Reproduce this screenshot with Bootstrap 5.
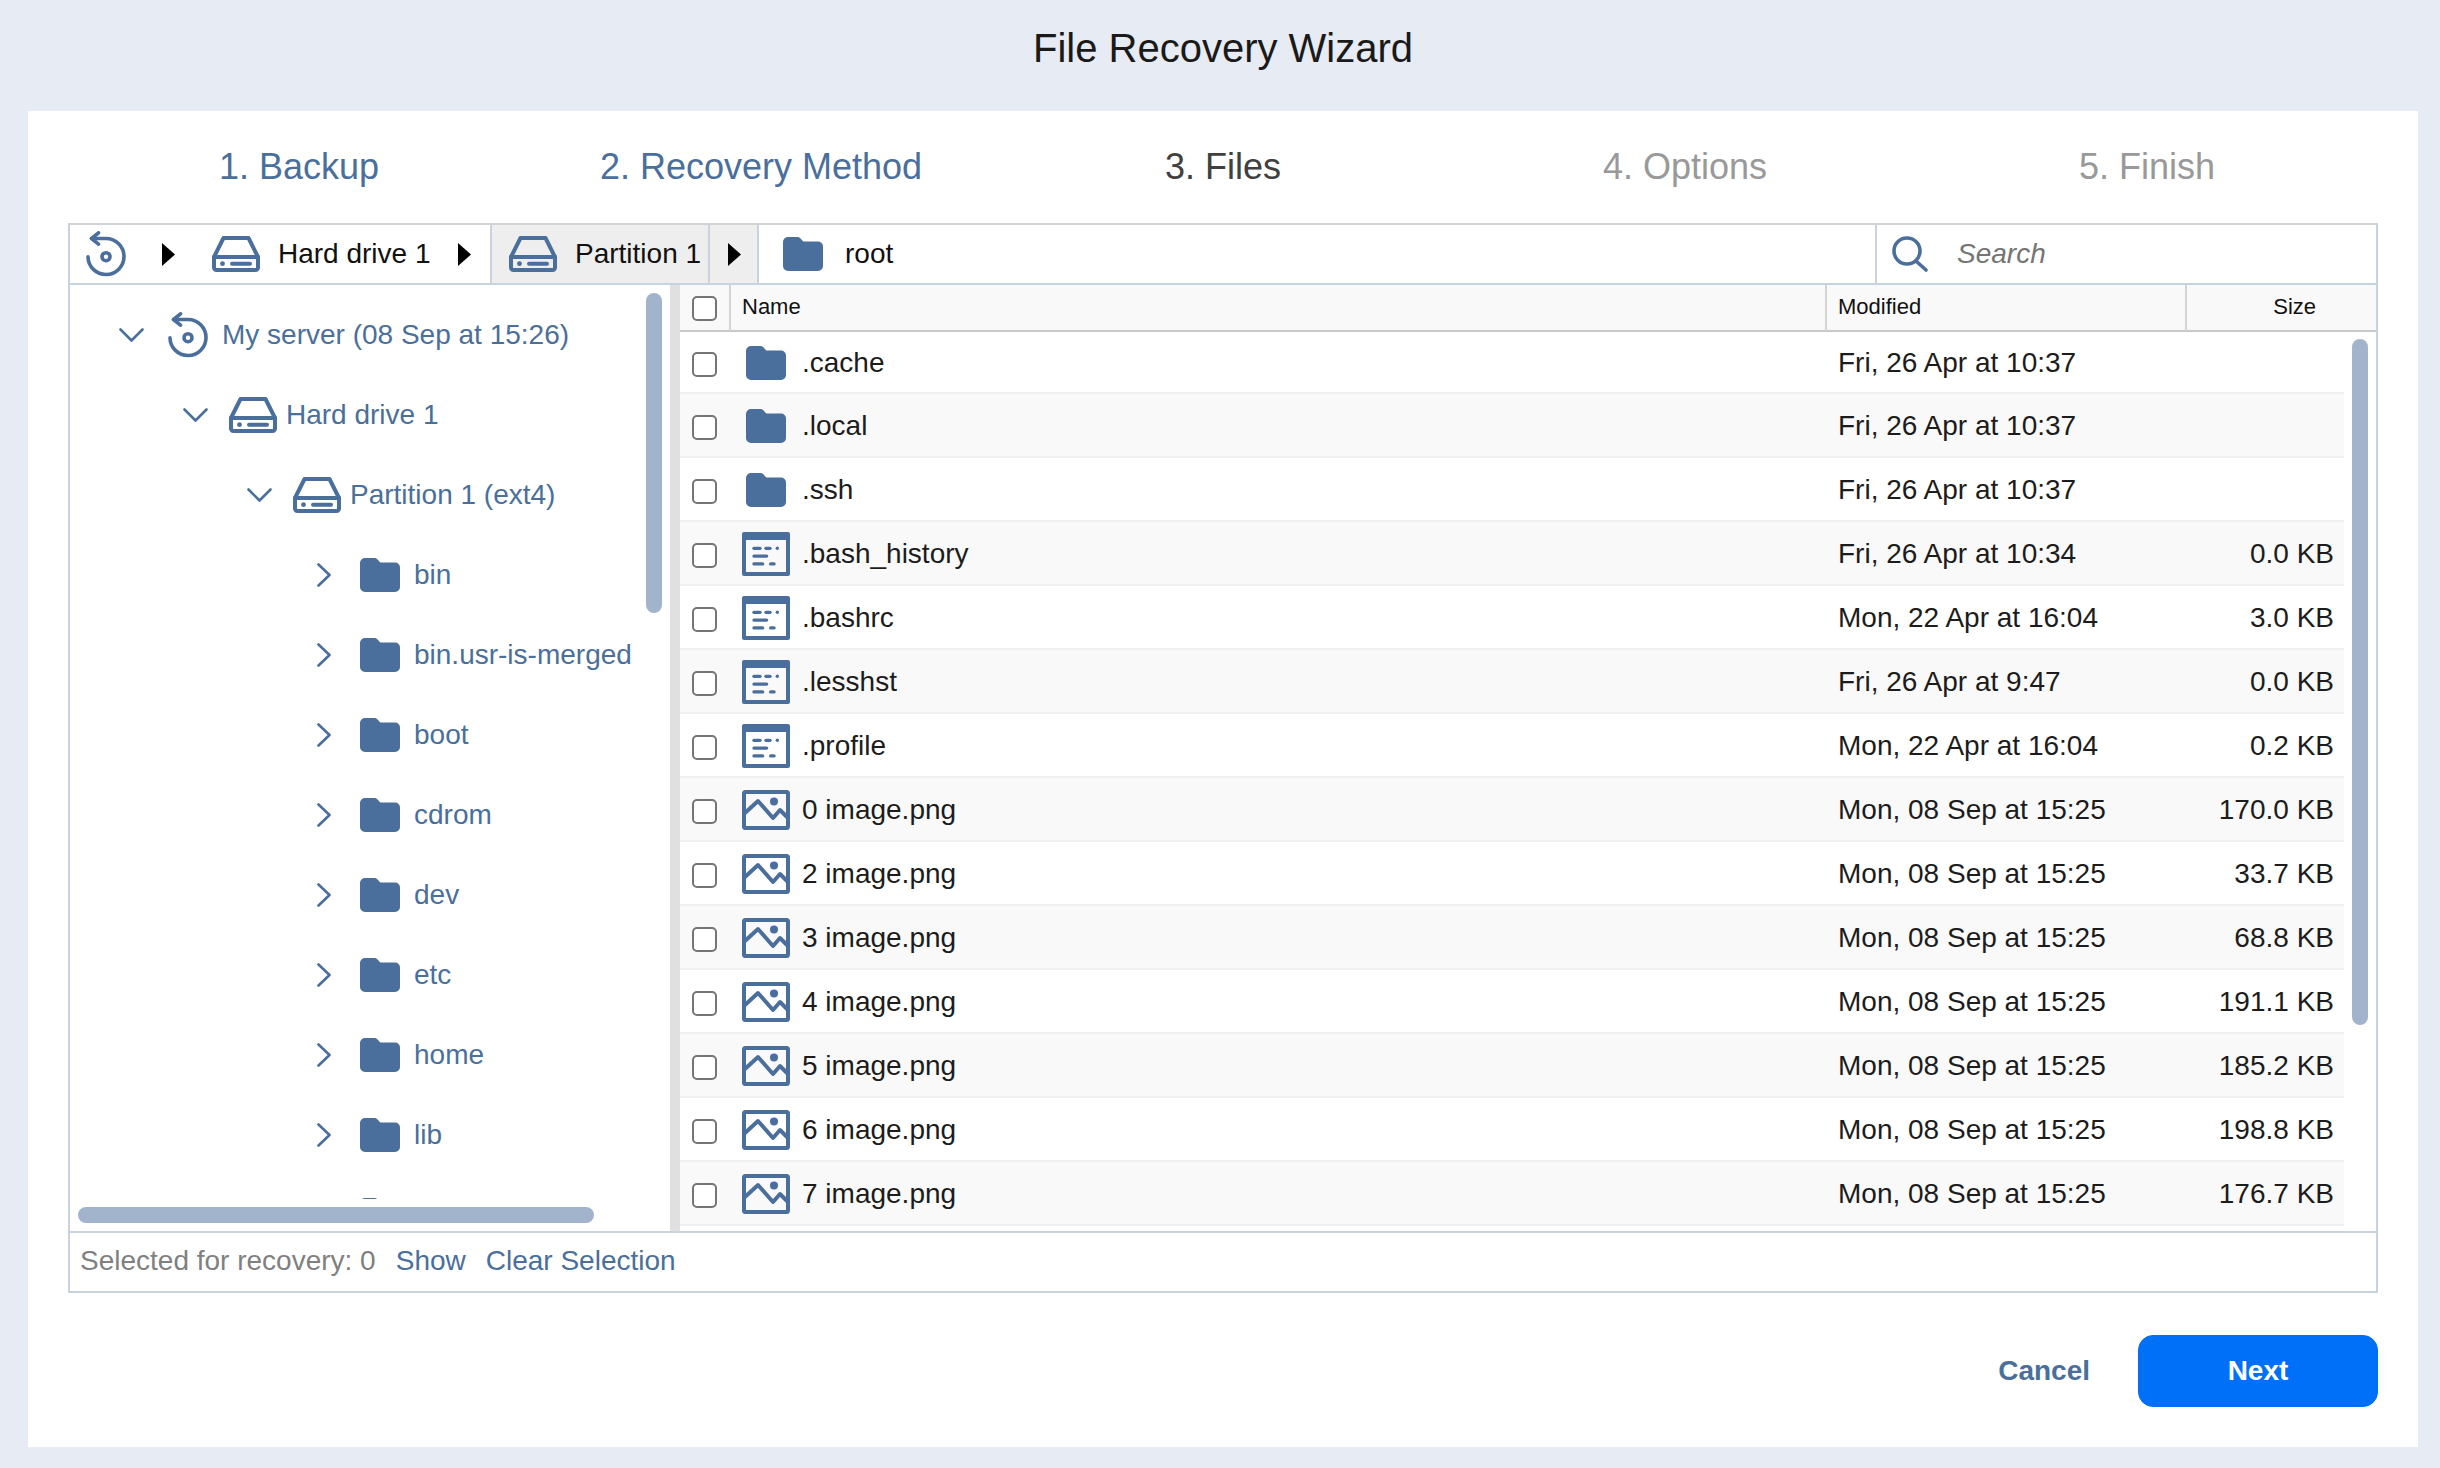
<!DOCTYPE html>
<html lang="en">
<head>
<meta charset="utf-8">
<title>File Recovery Wizard</title>
<link rel="stylesheet" href="https://cdn.jsdelivr.net/npm/bootstrap@5.3.0/dist/css/bootstrap.min.css">
<style>
html,body{margin:0;background:#e7ebf3;font-family:"Liberation Sans",Arial,sans-serif;font-size:28px;color:#1c1c1c;}
.app-shell{width:2440px;height:1468px;overflow:hidden;}
.wiz-title{height:111px;margin:0 0 0 28px;width:2390px;font-size:40px;font-weight:400;color:#1a1a1a;padding-bottom:16px;}
.wiz-card{margin-left:28px;width:2390px;height:1336px;background:#fff;padding:0 40px;}
.wiz-steps{height:112px;padding-bottom:0;}
.wiz-step{width:462px;font-size:36px;text-align:center;padding-top:0;line-height:1;}
.step-done{color:#4a6f9c;}
.step-now{color:#404040;}
.step-next{color:#999;}
.browser{height:1070px;border:2px solid #c8d3e0;border-top-color:#d0d3d6;}
svg{display:block;flex:none;}
.ico-fill{fill:#4a6f9c;}
.ico-line{fill:none;stroke:#4a6f9c;stroke-width:3.6;stroke-linecap:round;stroke-linejoin:round;}
.crumbs{height:60px;border-bottom:2px solid #c8d3e0;color:#111;}
.crumb-first{width:420px;padding-left:16px;}
.tri{width:13px;height:23px;fill:#000;}
.crumb-sel{background:#eee;border-right:2px solid #c8d3e0;}
.crumb-part{width:220px;padding-left:17px;white-space:nowrap;overflow:hidden;border-left:2px solid #c8d3e0;}
.crumb-arrow{width:49px;padding-left:18px;}
.crumb-root{padding-left:24px;}
.crumb-search{width:501px;padding-left:15px;border-left:2px solid #c8d3e0;color:#757575;font-style:italic;}
.ml-36{margin-left:36px;}.ml-37{margin-left:37px;}.ml-18{margin-left:18px;}.ml-22{margin-left:22px;}.ml-27{margin-left:27px;}.ml-29{margin-left:29px;}
.pane-row{height:946px;}
.tree-pane{width:600px;position:relative;}
.tree-clip{height:914px;overflow:hidden;padding-top:10px;}
.tree-row{height:80px;color:#4a6f9c;white-space:nowrap;}
.l1{padding-left:49px;}.l2{padding-left:113px;}.l3{padding-left:177px;}.l4{padding-left:247px;}
.tw{flex:none;}
.l1 .tw{width:49px;}.l2 .tw,.l3 .tw{width:46px;}.l4 .tw{width:43px;}
.gap-disk{margin-left:14px;}.gap-drive{margin-left:9px;}
.chev{fill:none;stroke:#4a6f9c;stroke-width:2.6;stroke-linecap:round;stroke-linejoin:round;}
.vbar,.hbar{position:absolute;background:#a2b4cc;border-radius:8px;}
.tree-vbar{left:576px;top:8px;width:16px;height:320px;}
.tree-hbar{left:8px;top:922px;width:516px;height:16px;}
.splitter{width:10px;background:#e0e0e0;}
.list-pane{width:1696px;position:relative;overflow:hidden;}
.list-vbar{left:1672px;top:54px;width:16px;height:686px;}
.file-table{margin:0;table-layout:fixed;width:1696px;border-collapse:separate;border-spacing:0;font-size:28px;color:#1c1c1c;--bs-table-bg:transparent;--bs-table-color:#1c1c1c;}
.file-table>thead>tr>th{height:47px;padding:0 0 2px 11px;background:#f9f9f9;border-bottom:2px solid #c8c8c8;border-left:2px solid #d4d4d4;font-size:22px;font-weight:400;color:#111;vertical-align:middle;}
.file-table>thead>tr>th:first-child{border-left:none;}
.file-table>tbody>tr>td{height:64px;padding:2px 0 0 0;vertical-align:middle;border-bottom:2px solid #f0f0f0;}
.file-table>tbody>tr:first-child>td{height:62px;}
.file-table>tbody>tr:nth-child(even)>td{background:#f9f9f9;}
.file-table>tbody>tr>td.gutter{border:none;background:#fff;}
.file-table .form-check-input{width:25px;height:25px;margin:2px 0 0;border:2px solid #757575;border-radius:5px;display:block;float:none;}
.file-table>thead .form-check-input{margin-top:4px;}
.c-check{width:49px;}
.c-name{width:1096px;}
.c-mod{width:360px;}
.c-size{width:159px;}
.c-gut{width:32px;}
.file-table>thead>tr>th.th-size{text-align:right;padding-right:60px;}
.file-table>thead>tr>th.th-check{padding-left:12px;}
.file-table>thead>tr>th.c-name-h{padding-left:11px;}
.td-check{padding-left:12px!important;}
.name-wrap{padding-left:13px;}
.icon-slot{width:48px;flex:none;}
.name-text{margin-left:12px;}
.td-mod{padding-left:13px!important;}
.td-size{text-align:right;padding-right:10px!important;}
.statusbar{height:60px;border-top:2px solid #c8d3e0;padding:0 0 3px 10px;column-gap:20px;color:#808080;}
.lnk{color:#4a6f9c;text-decoration:none;}
.wiz-foot{padding-top:42px;}
.btn-cancel{color:#4a6f9c;font-size:28px;font-weight:700;padding:0;border:0;margin-right:48px;text-decoration:none;}
.btn-next{width:240px;height:72px;background:#0070f8;border-color:#0070f8;border-radius:15px;font-size:28px;font-weight:700;color:#fff;}
</style>
</head>
<body>
<svg width="0" height="0" class="position-absolute">
<defs>
<symbol id="i-folder" viewBox="0 0 40 34"><path class="ico-fill" d="M5 0H14c1.800 0 2.800.6 3.800 1.800L20.300 4.500H35a5 5 0 0 1 5 5V29a5 5 0 0 1-5 5H5a5 5 0 0 1-5-5V5a5 5 0 0 1 5-5z"/></symbol>
<symbol id="i-hist" viewBox="0 0 40 46"><path class="ico-line" d="M5.500 7.500H20A18 18 0 1 1 2 25.700"/><path class="ico-line" d="M12.500 1.800L5.500 7.500L12.500 13.200"/><circle cx="20" cy="25.700" r="4" class="ico-line"/></symbol>
<symbol id="i-drive" viewBox="0 0 48 36"><path class="ico-line" style="stroke-width:4" d="M11.500 2H36.500L46 21V31.500a2.500 2.500 0 0 1-2.500 2.500H4.500A2.500 2.500 0 0 1 2 31.500V21Z"/><path class="ico-line" style="stroke-width:4" d="M2 21H46"/><circle cx="10.500" cy="27.700" r="2.400" class="ico-fill"/><rect x="18" y="25.700" width="22" height="4" rx="2" class="ico-fill"/></symbol>
<symbol id="i-file" viewBox="0 0 48 44"><path class="ico-fill" fill-rule="evenodd" d="M2 0H46a2 2 0 0 1 2 2V42a2 2 0 0 1-2 2H2a2 2 0 0 1-2-2V2a2 2 0 0 1 2-2zM4 8V40H44V8z"/><g class="ico-fill"><rect x="10.300" y="14.700" width="9.400" height="3.300" rx="1.650"/><rect x="22.300" y="14.700" width="7.400" height="3.300" rx="1.650"/><circle cx="35.300" cy="16.300" r="1.700"/><rect x="10.300" y="22.400" width="16" height="3.300" rx="1.650"/><rect x="10.300" y="30.300" width="12" height="3.300" rx="1.650"/><rect x="27" y="30.300" width="6.700" height="3.300" rx="1.650"/></g></symbol>
<symbol id="i-image" viewBox="0 0 48 40"><rect x="2" y="2" width="44" height="36" rx="1.500" class="ico-line" style="stroke-width:4"/><path class="ico-line" style="stroke-width:4" d="M3.500 22.500L16 11L31 28L38 20L45 27"/><circle cx="32" cy="11.500" r="4" class="ico-fill"/></symbol>
<symbol id="i-chev-d" viewBox="0 0 25 14"><path class="chev" d="M1.500 1.500L12.500 12.500L23.500 1.500"/></symbol>
<symbol id="i-chev-r" viewBox="0 0 14 24"><path class="chev" d="M1.500 1.500L12.500 12L1.500 22.500"/></symbol>
<symbol id="i-tri" viewBox="0 0 13 23"><path d="M0 0L13 11.500L0 23Z"/></symbol>
<symbol id="i-search" viewBox="0 0 36 36"><circle cx="15" cy="15" r="13" class="ico-line"/><path class="ico-line" d="M24 25L34 34"/></symbol>
</defs>
</svg>
<div class="app-shell">
  <h1 class="wiz-title d-flex align-items-center justify-content-center">File Recovery Wizard</h1>
  <main class="wiz-card">
    <div class="wiz-steps d-flex align-items-center">
      <div class="wiz-step step-done">1. Backup</div>
      <div class="wiz-step step-done">2. Recovery Method</div>
      <div class="wiz-step step-now">3. Files</div>
      <div class="wiz-step step-next">4. Options</div>
      <div class="wiz-step step-next">5. Finish</div>
    </div>
    <div class="browser">
      <div class="crumbs d-flex align-items-stretch">
        <div class="crumb-first d-flex align-items-center">
          <svg width="40" height="46"><use href="#i-hist"/></svg>
          <svg class="tri ml-36"><use href="#i-tri"/></svg>
          <svg class="ml-37" width="48" height="36"><use href="#i-drive"/></svg>
          <span class="ml-18 text-nowrap">Hard drive 1</span>
          <svg class="tri ml-27"><use href="#i-tri"/></svg>
        </div>
        <div class="crumb-sel crumb-part d-flex align-items-center">
          <svg width="48" height="36"><use href="#i-drive"/></svg>
          <span class="ml-18">Partition 1</span>
        </div>
        <div class="crumb-sel crumb-arrow d-flex align-items-center">
          <svg class="tri"><use href="#i-tri"/></svg>
        </div>
        <div class="crumb-root flex-grow-1 d-flex align-items-center">
          <svg width="40" height="34"><use href="#i-folder"/></svg>
          <span class="ml-22">root</span>
        </div>
        <div class="crumb-search d-flex align-items-center">
          <svg width="36" height="36"><use href="#i-search"/></svg>
          <span class="ml-29">Search</span>
        </div>
      </div>
      <div class="pane-row d-flex">
        <aside class="tree-pane">
          <div class="tree-clip">
            <div class="tree-row l1 d-flex align-items-center"><span class="tw"><svg width="25" height="14"><use href="#i-chev-d"/></svg></span><svg width="40" height="46"><use href="#i-hist"/></svg><span class="gap-disk">My server (08 Sep at 15:26)</span></div>
            <div class="tree-row l2 d-flex align-items-center"><span class="tw"><svg width="25" height="14"><use href="#i-chev-d"/></svg></span><svg width="48" height="36"><use href="#i-drive"/></svg><span class="gap-drive">Hard drive 1</span></div>
            <div class="tree-row l3 d-flex align-items-center"><span class="tw"><svg width="25" height="14"><use href="#i-chev-d"/></svg></span><svg width="48" height="36"><use href="#i-drive"/></svg><span class="gap-drive">Partition 1 (ext4)</span></div>
            <div class="tree-row l4 d-flex align-items-center"><span class="tw"><svg width="14" height="24"><use href="#i-chev-r"/></svg></span><svg width="40" height="34"><use href="#i-folder"/></svg><span class="gap-disk">bin</span></div>
            <div class="tree-row l4 d-flex align-items-center"><span class="tw"><svg width="14" height="24"><use href="#i-chev-r"/></svg></span><svg width="40" height="34"><use href="#i-folder"/></svg><span class="gap-disk">bin.usr-is-merged</span></div>
            <div class="tree-row l4 d-flex align-items-center"><span class="tw"><svg width="14" height="24"><use href="#i-chev-r"/></svg></span><svg width="40" height="34"><use href="#i-folder"/></svg><span class="gap-disk">boot</span></div>
            <div class="tree-row l4 d-flex align-items-center"><span class="tw"><svg width="14" height="24"><use href="#i-chev-r"/></svg></span><svg width="40" height="34"><use href="#i-folder"/></svg><span class="gap-disk">cdrom</span></div>
            <div class="tree-row l4 d-flex align-items-center"><span class="tw"><svg width="14" height="24"><use href="#i-chev-r"/></svg></span><svg width="40" height="34"><use href="#i-folder"/></svg><span class="gap-disk">dev</span></div>
            <div class="tree-row l4 d-flex align-items-center"><span class="tw"><svg width="14" height="24"><use href="#i-chev-r"/></svg></span><svg width="40" height="34"><use href="#i-folder"/></svg><span class="gap-disk">etc</span></div>
            <div class="tree-row l4 d-flex align-items-center"><span class="tw"><svg width="14" height="24"><use href="#i-chev-r"/></svg></span><svg width="40" height="34"><use href="#i-folder"/></svg><span class="gap-disk">home</span></div>
            <div class="tree-row l4 d-flex align-items-center"><span class="tw"><svg width="14" height="24"><use href="#i-chev-r"/></svg></span><svg width="40" height="34"><use href="#i-folder"/></svg><span class="gap-disk">lib</span></div>
            <div class="tree-row l4 d-flex align-items-center"><span class="tw"></span><svg width="40" height="34"><use href="#i-folder"/></svg></div>
          </div>
          <div class="vbar tree-vbar"></div>
          <div class="hbar tree-hbar"></div>
        </aside>
        <div class="splitter"></div>
        <section class="list-pane">
          <table class="table file-table">
            <colgroup><col class="c-check"><col class="c-name"><col class="c-mod"><col class="c-size"><col class="c-gut"></colgroup>
            <thead>
              <tr>
                <th class="th-check"><input class="form-check-input" type="checkbox" aria-label="Select all"></th>
                <th class="c-name-h">Name</th>
                <th>Modified</th>
                <th class="th-size" colspan="2">Size</th>
              </tr>
            </thead>
            <tbody id="rows">
              <tr><td class="td-check"><input class="form-check-input" type="checkbox"></td><td><div class="name-wrap d-flex align-items-center"><span class="icon-slot d-flex justify-content-center"><svg width="40" height="34"><use href="#i-folder"/></svg></span><span class="name-text">.cache</span></div></td><td class="td-mod">Fri, 26 Apr at 10:37</td><td class="td-size"></td><td class="gutter"></td></tr>
              <tr><td class="td-check"><input class="form-check-input" type="checkbox"></td><td><div class="name-wrap d-flex align-items-center"><span class="icon-slot d-flex justify-content-center"><svg width="40" height="34"><use href="#i-folder"/></svg></span><span class="name-text">.local</span></div></td><td class="td-mod">Fri, 26 Apr at 10:37</td><td class="td-size"></td><td class="gutter"></td></tr>
              <tr><td class="td-check"><input class="form-check-input" type="checkbox"></td><td><div class="name-wrap d-flex align-items-center"><span class="icon-slot d-flex justify-content-center"><svg width="40" height="34"><use href="#i-folder"/></svg></span><span class="name-text">.ssh</span></div></td><td class="td-mod">Fri, 26 Apr at 10:37</td><td class="td-size"></td><td class="gutter"></td></tr>
              <tr><td class="td-check"><input class="form-check-input" type="checkbox"></td><td><div class="name-wrap d-flex align-items-center"><span class="icon-slot"><svg width="48" height="44"><use href="#i-file"/></svg></span><span class="name-text">.bash_history</span></div></td><td class="td-mod">Fri, 26 Apr at 10:34</td><td class="td-size">0.0 KB</td><td class="gutter"></td></tr>
              <tr><td class="td-check"><input class="form-check-input" type="checkbox"></td><td><div class="name-wrap d-flex align-items-center"><span class="icon-slot"><svg width="48" height="44"><use href="#i-file"/></svg></span><span class="name-text">.bashrc</span></div></td><td class="td-mod">Mon, 22 Apr at 16:04</td><td class="td-size">3.0 KB</td><td class="gutter"></td></tr>
              <tr><td class="td-check"><input class="form-check-input" type="checkbox"></td><td><div class="name-wrap d-flex align-items-center"><span class="icon-slot"><svg width="48" height="44"><use href="#i-file"/></svg></span><span class="name-text">.lesshst</span></div></td><td class="td-mod">Fri, 26 Apr at 9:47</td><td class="td-size">0.0 KB</td><td class="gutter"></td></tr>
              <tr><td class="td-check"><input class="form-check-input" type="checkbox"></td><td><div class="name-wrap d-flex align-items-center"><span class="icon-slot"><svg width="48" height="44"><use href="#i-file"/></svg></span><span class="name-text">.profile</span></div></td><td class="td-mod">Mon, 22 Apr at 16:04</td><td class="td-size">0.2 KB</td><td class="gutter"></td></tr>
              <tr><td class="td-check"><input class="form-check-input" type="checkbox"></td><td><div class="name-wrap d-flex align-items-center"><span class="icon-slot"><svg width="48" height="40"><use href="#i-image"/></svg></span><span class="name-text">0 image.png</span></div></td><td class="td-mod">Mon, 08 Sep at 15:25</td><td class="td-size">170.0 KB</td><td class="gutter"></td></tr>
              <tr><td class="td-check"><input class="form-check-input" type="checkbox"></td><td><div class="name-wrap d-flex align-items-center"><span class="icon-slot"><svg width="48" height="40"><use href="#i-image"/></svg></span><span class="name-text">2 image.png</span></div></td><td class="td-mod">Mon, 08 Sep at 15:25</td><td class="td-size">33.7 KB</td><td class="gutter"></td></tr>
              <tr><td class="td-check"><input class="form-check-input" type="checkbox"></td><td><div class="name-wrap d-flex align-items-center"><span class="icon-slot"><svg width="48" height="40"><use href="#i-image"/></svg></span><span class="name-text">3 image.png</span></div></td><td class="td-mod">Mon, 08 Sep at 15:25</td><td class="td-size">68.8 KB</td><td class="gutter"></td></tr>
              <tr><td class="td-check"><input class="form-check-input" type="checkbox"></td><td><div class="name-wrap d-flex align-items-center"><span class="icon-slot"><svg width="48" height="40"><use href="#i-image"/></svg></span><span class="name-text">4 image.png</span></div></td><td class="td-mod">Mon, 08 Sep at 15:25</td><td class="td-size">191.1 KB</td><td class="gutter"></td></tr>
              <tr><td class="td-check"><input class="form-check-input" type="checkbox"></td><td><div class="name-wrap d-flex align-items-center"><span class="icon-slot"><svg width="48" height="40"><use href="#i-image"/></svg></span><span class="name-text">5 image.png</span></div></td><td class="td-mod">Mon, 08 Sep at 15:25</td><td class="td-size">185.2 KB</td><td class="gutter"></td></tr>
              <tr><td class="td-check"><input class="form-check-input" type="checkbox"></td><td><div class="name-wrap d-flex align-items-center"><span class="icon-slot"><svg width="48" height="40"><use href="#i-image"/></svg></span><span class="name-text">6 image.png</span></div></td><td class="td-mod">Mon, 08 Sep at 15:25</td><td class="td-size">198.8 KB</td><td class="gutter"></td></tr>
              <tr><td class="td-check"><input class="form-check-input" type="checkbox"></td><td><div class="name-wrap d-flex align-items-center"><span class="icon-slot"><svg width="48" height="40"><use href="#i-image"/></svg></span><span class="name-text">7 image.png</span></div></td><td class="td-mod">Mon, 08 Sep at 15:25</td><td class="td-size">176.7 KB</td><td class="gutter"></td></tr>
            </tbody>
          </table>
          <div class="vbar list-vbar"></div>
        </section>
      </div>
      <div class="statusbar d-flex align-items-center">
        <span>Selected for recovery: 0</span>
        <a class="lnk" href="#">Show</a>
        <a class="lnk" href="#">Clear Selection</a>
      </div>
    </div>
    <div class="wiz-foot d-flex justify-content-end align-items-center">
      <button type="button" class="btn btn-link btn-cancel">Cancel</button>
      <button type="button" class="btn btn-primary btn-next">Next</button>
    </div>
  </main>
</div>
<script src="https://cdn.jsdelivr.net/npm/bootstrap@5.3.0/dist/js/bootstrap.bundle.min.js"></script>
</body>
</html>
